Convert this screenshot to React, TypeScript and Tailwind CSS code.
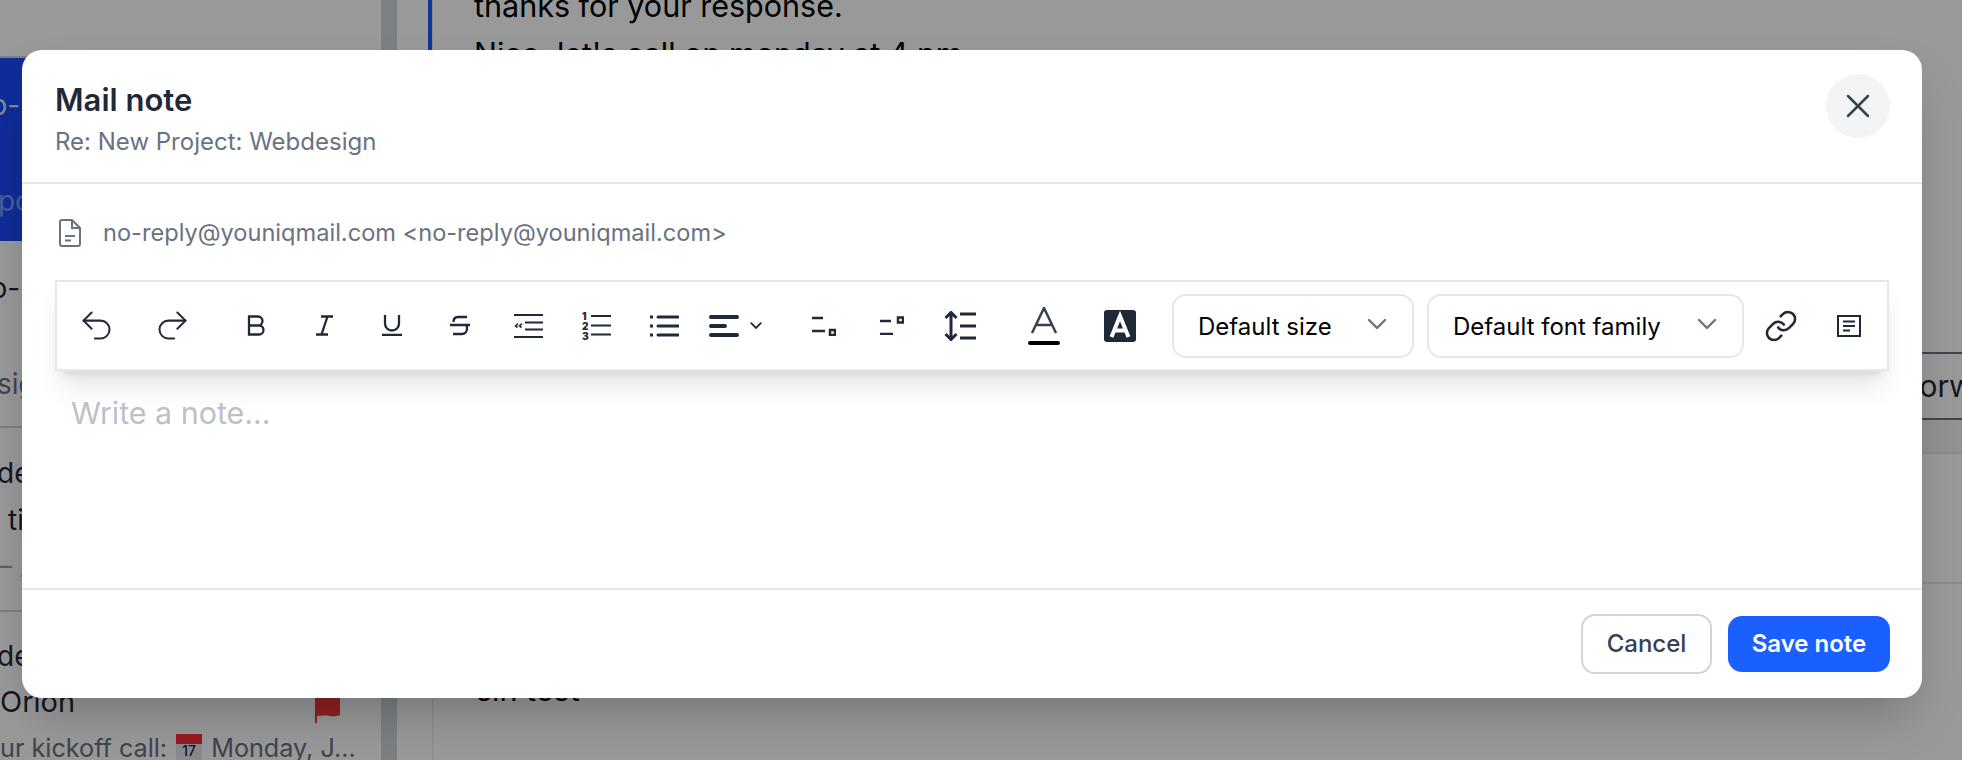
import { ChevronDown, Redo2, Undo2, X, Link } from "lucide-react";
import type { ReactNode } from "react";

function ToolBtn({ className = "w-[68px]", children }: { className?: string; children: ReactNode }) {
  return <button className={`flex h-[64px] shrink-0 items-center justify-center text-[#1f2937] ${className}`}>{children}</button>;
}

function Glyph({ w, h, sw = 2.3, children }: { w: number; h: number; sw?: number; children: ReactNode }) {
  return (
    <svg width={w} height={h} viewBox={`0 0 ${w} ${h}`} fill="none" stroke="currentColor" strokeWidth={sw}>
      {children}
    </svg>
  );
}

function SelectBox({ label, className }: { label: string; className: string }) {
  return (
    <div className={`flex h-[64px] shrink-0 items-center justify-between rounded-[14px] border-2 border-gray-200 bg-white pl-[24px] pr-[19px] text-[24px] text-black ${className}`}>
      <span className="pt-[3px]">{label}</span>
      <ChevronDown size={32} strokeWidth={1.8} className="-mt-[4px] text-gray-500" />
    </div>
  );
}

function Toolbar() {
  return (
    <div className="flex h-[91px] items-center border-2 border-gray-200 bg-white shadow-xl">
      <ToolBtn className="ml-[5px] w-[68px]"><Undo2 size={39} strokeWidth={1.25} /></ToolBtn>
      <ToolBtn className="ml-[8px] w-[68px]"><Redo2 size={39} strokeWidth={1.25} /></ToolBtn>
      <ToolBtn className="ml-[16px] w-[68px]">
        <Glyph w={19} h={21}><path d="M2 1.5h9a4.5 4.5 0 0 1 0 9H2zM2 10.5h10a4.5 4.5 0 0 1 0 9H2z" /></Glyph>
      </ToolBtn>
      <ToolBtn>
        <Glyph w={19} h={21}><path d="M6 1.5h12M1 19.5h12M12.5 1.5 6.500 19.500" /></Glyph>
      </ToolBtn>
      <ToolBtn>
        <Glyph w={20} h={21}><path d="M3 0v8.500a7 7 0 0 0 14 0V0M0 20h20" /></Glyph>
      </ToolBtn>
      <ToolBtn>
        <Glyph w={20} h={21}><path d="M17 2H8C5 2 3.500 4 3.500 7M0 10h20M16.500 10c.5 1 .5 2 .5 3.500 0 3-2 5.500-5 5.500H3" /></Glyph>
      </ToolBtn>
      <ToolBtn>
        <Glyph w={29} h={24} sw={2.2}>
          <path d="M0 1h29M11 8.500h18M11 15.500h18M0 23h29" />
          <path d="M4 9.500 1.500 12l2 1.500M8 9.500 5.500 12l2 1.500" strokeWidth={1.6} />
        </Glyph>
      </ToolBtn>
      <ToolBtn>
        <svg width={29} height={28} viewBox="0 0 29 28" fill="none" stroke="currentColor" strokeWidth={2.2}>
          <path d="M9 4h20M9 13.500h20M9 22.500h20" />
          <text x="0" y="8" fontSize="10" fontWeight="900" fontFamily="Inter, sans-serif" fill="currentColor" stroke="none">1</text>
          <text x="0" y="18" fontSize="10" fontWeight="900" fontFamily="Inter, sans-serif" fill="currentColor" stroke="none">2</text>
          <text x="0" y="27.500" fontSize="10" fontWeight="900" fontFamily="Inter, sans-serif" fill="currentColor" stroke="none">3</text>
        </svg>
      </ToolBtn>
      <ToolBtn>
        <Glyph w={30} h={22} sw={3}>
          <path d="M9 2h20M9 11h20M9 20h20" strokeLinecap="round" />
          <path d="M1 2h3M1 11h3M1 20h3" />
        </Glyph>
      </ToolBtn>
      <ToolBtn className="w-[75px]">
        <div className="flex items-center gap-[11px]">
          <Glyph w={30} h={22} sw={4}><path d="M2 2h26M2 11h14M2 20h26" strokeLinecap="round" /></Glyph>
          <Glyph w={12} h={7} sw={1.8}><path d="m.7.7 5.300 5.300L11.300.7" /></Glyph>
        </div>
      </ToolBtn>
      <ToolBtn className="ml-[17px] w-[68px]">
        <Glyph w={24} h={20} sw={2.5}>
          <path d="M0 2h11M0 15h13" />
          <rect x="18" y="14" width="5" height="5" />
        </Glyph>
      </ToolBtn>
      <ToolBtn>
        <Glyph w={24} h={19} sw={2.5}>
          <path d="M0 5h11M0 18h13" />
          <rect x="18" y="1.500" width="5" height="5" />
        </Glyph>
      </ToolBtn>
      <ToolBtn>
        <Glyph w={32} h={30} sw={3}>
          <path d="M7 2v26M1.500 7 7 1.500 12.500 7M1.500 23 7 28.500l5.500-5.500M16 3h16M16 15h16M16 27h16" />
        </Glyph>
      </ToolBtn>
      <ToolBtn className="ml-[16px] w-[68px]">
        <svg width={32} height={38} viewBox="0 0 32 38" fill="none">
          <path d="M4 26 16 1l12 25M8 18h16" stroke="#374151" strokeWidth={2.5} />
          <rect x="0" y="34" width="32" height="4" rx="2" fill="#000" />
        </svg>
      </ToolBtn>
      <ToolBtn className="ml-[8px] w-[68px]">
        <svg width={32} height={32} viewBox="0 0 32 32" fill="none">
          <rect width="32" height="32" rx="3" fill="#1f2937" />
          <path d="M7.500 27 16 6l8.500 21M10.500 20.500h11" stroke="#fff" strokeWidth={4} />
        </svg>
      </ToolBtn>
      <SelectBox label="Default size" className="ml-[18px] w-[242px]" />
      <SelectBox label="Default font family" className="ml-[13px] w-[317px]" />
      <ToolBtn className="ml-[3px] w-[68px]"><Link size={34} strokeWidth={1.8} /></ToolBtn>
      <ToolBtn>
        <Glyph w={24} h={22} sw={2}>
          <rect x="1" y="1" width="22" height="20" />
          <path d="M6 6.500h12M6 11h12M6 15.500h7" />
        </Glyph>
      </ToolBtn>
    </div>
  );
}

function MailList() {
  return (
    <div className="w-[381px] shrink-0 overflow-hidden text-[28px] whitespace-nowrap">
      <div className="h-[58px] border-b-2 border-gray-300" />
      <div className="h-[183px] bg-[#1a4bff] pt-[23px] leading-[48px] text-blue-100">
        <div className="-ml-[26px]">no-reply@youniqmail.com</div>
        <div>&nbsp;</div>
        <div className="-ml-[36px] text-[#7f9bff]">Report</div>
      </div>
      <div className="h-[187px] border-b-2 border-gray-300 pt-[23px] leading-[48px] text-[#1f2937]">
        <div className="-ml-[26px]">no-reply@youniqmail.com</div>
        <div>&nbsp;</div>
        <div className="-ml-[3px] text-gray-500">sign</div>
      </div>
      <div className="h-[184px] border-b-2 border-gray-300 pt-[22px] leading-[47px] text-[#1f2937]">
        <div className="-ml-[3px]">der</div>
        <div className="ml-[8px]">time</div>
        <div className="-ml-[16px] text-gray-400">— All</div>
      </div>
      <div className="pt-[21px] leading-[46px] text-[#1f2937]">
        <div className="-ml-[3px]">der</div>
        <div className="flex items-center justify-between pr-[41px] text-[29px]">
          <span>Orion</span>
          <svg width={26} height={42} viewBox="0 0 26 42"><path d="M1 0h25v34c-6 3-12-1-23 1v7H1z" fill="#ef3939" /></svg>
        </div>
        <div className="flex items-center gap-[9px] text-[25.200px] text-gray-500">
          <span>ur kickoff call:</span>
          <span className="flex h-[28px] w-[26px] flex-col bg-gray-200 text-center text-[14px] leading-none text-black">
            <span className="h-[10px] bg-red-500" />
            <span>17</span>
          </span>
          <span>Monday, J...</span>
        </div>
      </div>
    </div>
  );
}

function MailBody() {
  return (
    <div className="min-w-0 flex-1 border-l border-gray-200 text-[30.500px] whitespace-nowrap">
      <div className="-ml-[5px] h-[352px] overflow-hidden border-l-4 border-blue-600 pl-[42px] leading-[46px] text-black">
        <div className="-mt-[17px]">thanks for your response.</div>
        <div className="mt-[2px]">Nice, let's call on monday at 4 pm.</div>
      </div>
      <div className="flex h-[68px] items-center border-y-2 border-gray-500 pl-[1470px] text-[30px] text-[#1f2937]">Forward</div>
      <div className="h-[34px] border-b-2 border-gray-200 bg-gray-100" />
      <div className="h-[130px] border-b-2 border-gray-200" />
      <div className="pl-[43px] pt-[89px] leading-[34px] text-black">sin test</div>
    </div>
  );
}

export default function App() {
  return (
    <div className="relative flex h-screen w-full overflow-hidden bg-white" style={{ fontFamily: "Inter, sans-serif" }}>
      <MailList />
      <div className="w-[16px] shrink-0 bg-gray-300" />
      <div className="w-[35px] shrink-0" />
      <MailBody />

      {/* Note modal */}
      <div className="absolute inset-0 bg-black/40 pl-[22px] pt-[50px]">
        <div className="flex h-[648px] w-[1900px] flex-col rounded-[20px] bg-white shadow-2xl">
          {/* Header */}
          <div className="flex h-[134px] shrink-0 items-start justify-between border-b-2 border-gray-200 pl-[33px] pr-[32px] pt-[24px]">
            <div className="pt-[2px]">
              <h2 className="text-[31px] leading-[48px] font-semibold text-[#1f2937]">Mail note</h2>
              <p className="mt-[3px] text-[24px] leading-[30px] text-gray-500">Re: New Project: Webdesign</p>
            </div>
            <button className="flex h-[64px] w-[64px] items-center justify-center rounded-full bg-gray-100 text-gray-700">
              <X size={40} strokeWidth={1.5} />
            </button>
          </div>

          {/* Sender */}
          <div className="flex h-[96px] shrink-0 items-center pl-[37px] pt-[2px] text-[23.600px] text-gray-500">
            <svg width={22} height={28} viewBox="0 0 22 28" fill="none" stroke="currentColor" strokeWidth={2}>
              <path d="M3 1h10l8 8v16a2 2 0 0 1-2 2H3a2 2 0 0 1-2-2V3a2 2 0 0 1 2-2zM13 1v8h8M6 17h10M6 21.500h6" />
            </svg>
            <span className="ml-[22px]">no-reply@youniqmail.com &lt;no-reply@youniqmail.com&gt;</span>
          </div>

          {/* Editor */}
          <div className="min-h-0 flex-1 px-[33px]">
            <Toolbar />
            <p className="mt-[24px] pl-[16px] text-[30.400px] leading-[36px] text-[#bcc0ca]">Write a note...</p>
          </div>

          {/* Footer */}
          <div className="flex h-[110px] shrink-0 items-center justify-end gap-[16px] border-t-2 border-gray-200 pr-[32px]">
            <button className="h-[60px] w-[131px] rounded-[14px] border-2 border-gray-300 bg-white text-[24px] font-medium text-gray-700">Cancel</button>
            <button className="h-[56px] w-[162px] rounded-[14px] bg-[#1a5fff] text-[24px] font-semibold text-white">Save note</button>
          </div>
        </div>
      </div>
    </div>
  );
}
